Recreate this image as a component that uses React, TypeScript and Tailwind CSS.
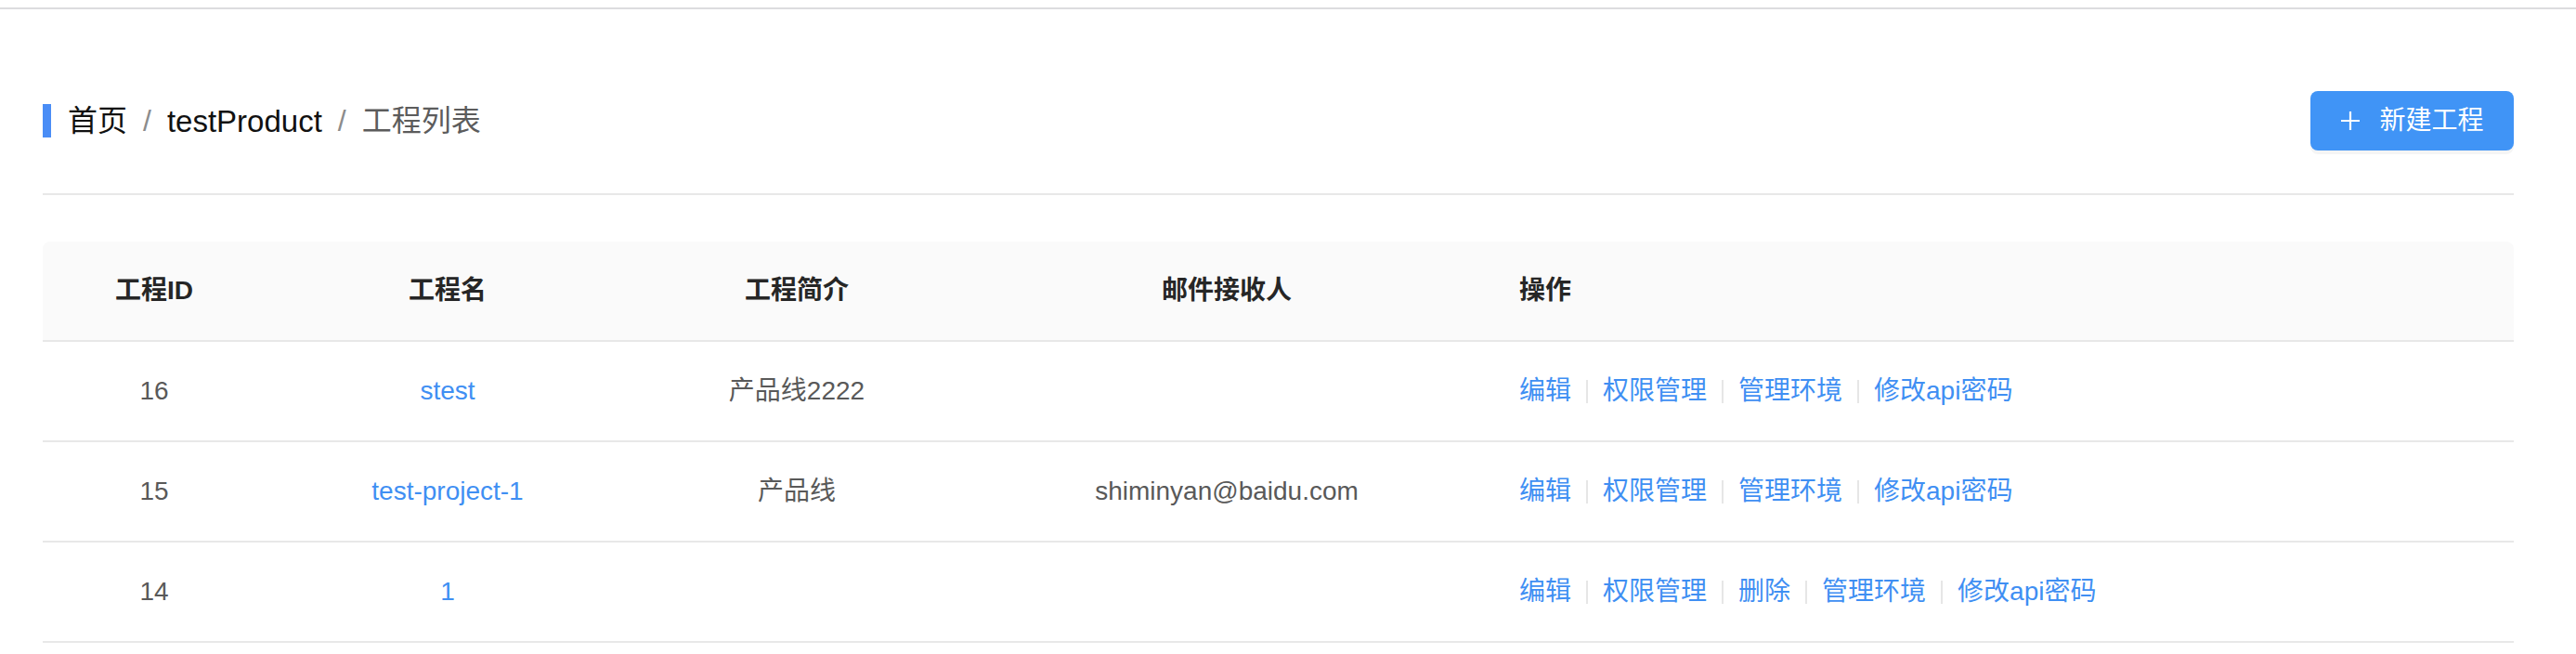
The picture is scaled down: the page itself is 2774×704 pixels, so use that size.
import { Fragment } from 'react'

const FONT = 'font-["Liberation_Sans","Noto_Sans_CJK_SC",sans-serif]'

const COLS = 'grid grid-cols-[240px_392px_360px_566px_1fr]'

const ROWS = [
  { id: '16', name: 'stest', desc: '产品线2222', mail: '', actions: ['编辑', '权限管理', '管理环境', '修改api密码'] },
  { id: '15', name: 'test-project-1', desc: '产品线', mail: 'shiminyan@baidu.com', actions: ['编辑', '权限管理', '管理环境', '修改api密码'] },
  { id: '14', name: '1', desc: '', mail: '', actions: ['编辑', '权限管理', '删除', '管理环境', '修改api密码'] },
]

function PlusIcon() {
  return (
    <svg width="22" height="22" viewBox="0 0 22 22" className="shrink-0">
      <path d="M11 1v20M1 11h20" stroke="#fff" strokeWidth="2.2" />
    </svg>
  )
}

export default function App() {
  return (
    <div className={`min-h-[704px] w-full bg-white ${FONT}`}>
      <div className="h-[10px] border-b-2 border-[#dcdcdf]" />

      <div className="pl-[46px] pr-[67px]">
        {/* breadcrumb + action */}
        <div className="mt-[88px] flex h-[64px] items-center justify-between">
          <div className="flex items-center">
            <div className="h-[36px] w-[9px] bg-[#4a8df6]" />
            <div className="ml-[18px] flex items-center text-[32px] leading-none">
              <span className="text-[#111]">首页</span>
              <span className="mx-[17px] text-[#8c8c8c]">/</span>
              <span className="text-[33px] text-[#111]">testProduct</span>
              <span className="mx-[17px] text-[#8c8c8c]">/</span>
              <span className="text-[#5c5c5c]">工程列表</span>
            </div>
          </div>
          <button className="flex h-[64px] w-[219px] items-center justify-center gap-[20px] rounded-[8px] bg-[#4094f6] text-[28px] text-white shadow-[0_4px_0_rgba(0,0,0,0.04)]">
            <PlusIcon />
            <span>新建工程</span>
          </button>
        </div>

        <div className="mt-[46px] h-[2px] bg-[#e8e8e8]" />

        {/* table */}
        <div className="mt-[50px] text-[28px]">
          <div className={`${COLS} h-[108px] rounded-t-[8px] border-b-2 border-[#e8e8e8] bg-[#fafafa] font-semibold text-[#262626]`}>
            <div className="flex items-center justify-center">工程ID</div>
            <div className="flex items-center justify-center">工程名</div>
            <div className="flex items-center justify-center">工程简介</div>
            <div className="flex items-center justify-center">邮件接收人</div>
            <div className="flex items-center pl-[32px]">操作</div>
          </div>

          {ROWS.map((r) => (
            <div key={r.id} className={`${COLS} h-[108px] border-b-2 border-[#e8e8e8] text-[#595959]`}>
              <div className="flex items-center justify-center">{r.id}</div>
              <div className="flex items-center justify-center text-[#3f8ff3]">{r.name}</div>
              <div className="flex items-center justify-center">{r.desc}</div>
              <div className="flex items-center justify-center">{r.mail}</div>
              <div className="flex items-center pl-[32px] text-[#3f8ff3]">
                {r.actions.map((a, i) => (
                  <Fragment key={a}>
                    {i > 0 && <span className="mx-[16px] h-[25px] w-[2px] bg-[#e6e6e6]" />}
                    <span>{a}</span>
                  </Fragment>
                ))}
              </div>
            </div>
          ))}
        </div>
      </div>
    </div>
  )
}
